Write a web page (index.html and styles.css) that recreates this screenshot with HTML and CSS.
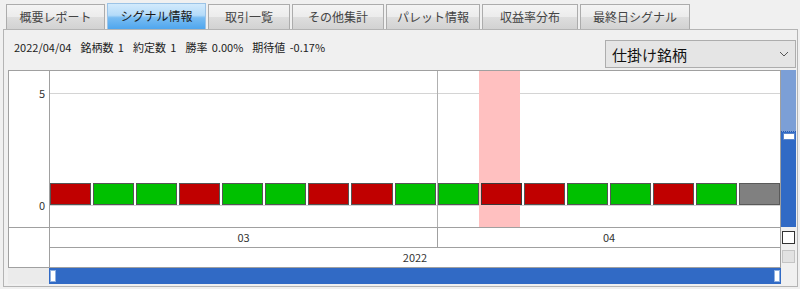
FILE: index.html
```html
<!DOCTYPE html>
<html lang="ja">
<head>
  <meta charset="UTF-8" />
  <title>シグナル情報</title>
  <link rel="stylesheet" href="styles.css">
</head>
<body>

  <div class="tabs">
    <div class="tab t1">概要レポート</div>
    <div class="tab t2 active">シグナル情報</div>
    <div class="tab t3">取引一覧</div>
    <div class="tab t4">その他集計</div>
    <div class="tab t5">パレット情報</div>
    <div class="tab t6">収益率分布</div>
    <div class="tab t7">最終日シグナル</div>
  </div>

  <div class="panel">
    <div class="toolbar">
      <div class="summary">2022/04/04&nbsp; 銘柄数 1&nbsp; 約定数 1&nbsp; 勝率 0.00%&nbsp; 期待値 -0.17%</div>
      <div class="select">
        <span>仕掛け銘柄</span>
        <svg width="10" height="6" viewBox="0 0 10 6"><path d="M1 1 L5 5 L9 1" fill="none" stroke="#555" stroke-width="1"/></svg>
      </div>
    </div>

    <div class="chart-row">
      <div class="chart">
        <div class="axis">
          <span class="tick tick-5">5</span>
          <span class="tick tick-0">0</span>
        </div>
        <div class="plot">
          <div class="grid-line line-5"></div>
          <div class="grid-line line-0"></div>
          <div class="month-sep"></div>
          <div class="highlight"></div>
          <div class="bars">
            <div class="bar loss"></div>
            <div class="bar win"></div>
            <div class="bar win"></div>
            <div class="bar loss"></div>
            <div class="bar win"></div>
            <div class="bar win"></div>
            <div class="bar loss"></div>
            <div class="bar loss"></div>
            <div class="bar win"></div>
            <div class="bar win"></div>
            <div class="bar loss dashed"></div>
            <div class="bar loss"></div>
            <div class="bar win"></div>
            <div class="bar win"></div>
            <div class="bar loss"></div>
            <div class="bar win"></div>
            <div class="bar open"></div>
          </div>
        </div>
        <div class="corner"></div>
        <div class="months">
          <div class="month m03">03</div>
          <div class="month m04">04</div>
        </div>
        <div class="year">2022</div>
      </div>

      <div class="side">
        <div class="vscroll">
          <div class="vtrack"></div>
          <div class="vthumb"></div>
          <div class="vfill"></div>
        </div>
        <div class="check"></div>
        <div class="check disabled"></div>
      </div>
    </div>

    <div class="hscroll-row">
      <div class="hscroll-pad"></div>
      <div class="hscroll">
        <div class="hthumb"></div>
        <div class="hthumb"></div>
      </div>
    </div>
  </div>

</body>
</html>
```

FILE: styles.css
```css
body {
  margin: 0;
  background: #f0f0f0;
  font-family: "Noto Sans CJK JP", "DejaVu Sans", sans-serif;
  color: #222;
  width: 800px;
  height: 289px;
  overflow: hidden;
}

/* tabs */
.tabs {
  display: flex;
  align-items: flex-end;
  gap: 2px;
  height: 29px;
  padding-left: 6px;
}
.tab {
  box-sizing: border-box;
  height: 25px;
  border: 1px solid #acacac;
  border-bottom: none;
  background: linear-gradient(#f4f4f4, #ececec 50%, #dedede 50%, #d2d2d2);
  font-size: 12px;
  line-height: 24px;
  text-align: center;
  color: #444;
}
.tab.active {
  height: 26px;
  border-color: #9cc3e6;
  background: linear-gradient(#d2eafc, #b4dbf9 45%, #78bcf2 55%, #4fa6ee);
  color: #1a1a1a;
}
.t1 { width: 99px; }
.t2 { width: 99px; }
.t3 { width: 82px; }
.t4 { width: 92px; }
.t5 { width: 94px; }
.t6 { width: 96px; }
.t7 { width: 110px; }

/* panel */
.panel {
  box-sizing: border-box;
  width: 795px;
  height: 258px;
  margin-left: 3px;
  border: 1px solid #b4b4b4;
  background: #f0f0f0;
}
.toolbar {
  display: flex;
  justify-content: space-between;
  height: 40px;
}
.summary {
  font-size: 11px;
  word-spacing: 2px;
  padding: 9px 0 0 10px;
  color: #222;
}
.select {
  box-sizing: border-box;
  display: flex;
  align-items: center;
  justify-content: space-between;
  width: 191px;
  height: 28px;
  margin: 10px 1px 0 0;
  padding: 0 6px 0 6px;
  border: 1px solid #adadad;
  background: #e5e5e5;
  font-size: 15px;
  color: #111;
}

/* chart */
.chart-row {
  display: flex;
  padding-left: 4px;
}
.chart {
  display: grid;
  grid-template-columns: 40px 731px;
  grid-template-rows: 156px 20px 20px;
  border: 1px solid #a0a0a0;
  background: #fff;
}
.axis {
  position: relative;
}
.tick {
  position: absolute;
  right: 4px;
  font-size: 11px;
  line-height: 12px;
  color: #333;
}
.tick-5 { top: 16px; }
.tick-0 { top: 128px; }

.plot {
  position: relative;
  border-left: 1px solid #a0a0a0;
}
.grid-line {
  position: absolute;
  left: 0;
  right: 0;
  height: 1px;
  background: #d4d4d4;
}
.line-5 { top: 22px; }
.line-0 { top: 134px; }
.month-sep {
  position: absolute;
  left: 387px;
  top: 0;
  bottom: 0;
  width: 1px;
  background: #b0b0b0;
}
.highlight {
  position: absolute;
  left: 429px;
  width: 41px;
  top: 0;
  bottom: 0;
  background: #ffc0c0;
}
.bars {
  position: absolute;
  left: 0;
  right: 0;
  top: 112px;
  display: flex;
  gap: 2px;
  height: 22px;
}
.bar {
  flex: 1;
  box-sizing: border-box;
  border: 1px solid #555;
}
.bar.win { background: #00c000; }
.bar.loss { background: #c00000; }
.bar.open { background: #808080; border-color: #5a5a5a; }
.bar.dashed { border-color: #3a3a3a; }

.corner {
  grid-row: 2 / 4;
  border-top: 1px solid #a0a0a0;
}
.months {
  display: flex;
  border-top: 1px solid #a0a0a0;
  border-left: 1px solid #a0a0a0;
}
.month {
  font-size: 11px;
  line-height: 19px;
  text-align: center;
  color: #333;
}
.m03 {
  width: 387px;
  border-right: 1px solid #a0a0a0;
}
.m04 {
  flex: 1;
}
.year {
  border-top: 1px solid #a0a0a0;
  border-left: 1px solid #a0a0a0;
  font-size: 11px;
  line-height: 19px;
  text-align: center;
  color: #333;
}

/* right side scroll + checks */
.side {
  width: 15px;
  display: flex;
  flex-direction: column;
  align-items: center;
}
.vscroll {
  width: 15px;
  height: 157px;
  display: flex;
  flex-direction: column;
  align-items: center;
  background: #316ac5;
}
.vtrack {
  width: 15px;
  height: 61px;
  background: #7c9fd6;
  border-bottom: 1px dotted #2a5cb0;
}
.vthumb {
  box-sizing: border-box;
  width: 12px;
  height: 7px;
  margin-top: 1px;
  background: #fff;
  border: 1px solid #5a86cc;
}
.vfill {
  flex: 1;
}
.check {
  box-sizing: border-box;
  width: 13px;
  height: 13px;
  margin-top: 4px;
  background: #fff;
  border: 1px solid #333;
}
.check.disabled {
  margin-top: 6px;
  background: #e2e2e2;
  border-color: #c4c4c4;
}

.hscroll-row {
  display: flex;
  padding-left: 4px;
  height: 16px;
}
.hscroll-pad {
  width: 41px;
  background: #ebebeb;
}
.hscroll {
  box-sizing: border-box;
  width: 732px;
  display: flex;
  justify-content: space-between;
  align-items: center;
  padding: 0 1px;
  background: #316ac5;
}
.hthumb {
  width: 6px;
  height: 12px;
  background: #fff;
  border: 1px solid #8fb0e0;
  box-sizing: border-box;
}
```
